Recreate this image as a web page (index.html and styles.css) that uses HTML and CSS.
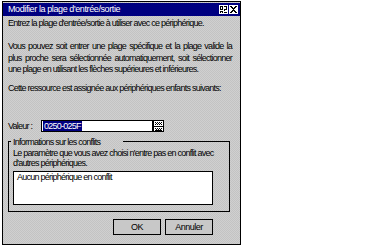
FILE: index.html
```html
<!DOCTYPE html>
<html lang="fr">
<head>
  <meta charset="UTF-8" />
  <title>Modifier la plage d'entrée/sortie</title>
  <link rel="stylesheet" href="styles.css">
</head>
<body>
  <div class="dialog">
    <div class="titlebar">
      <span class="title">Modifier la plage d'entrée/sortie</span>
      <span class="title-icons">
        <svg width="9" height="9" viewBox="0 0 9 9" shape-rendering="crispEdges">
          <rect x="0" y="0" width="9" height="9" fill="#fff"/>
          <path d="M1 1h3v1H1zM1 2h1v3H1zM3 2h1v2H3zM2 4h2v1H2zM5 1h3v1H5zM7 2h1v2H7zM5 4h3v1H5zM5 5h1v1H5zM1 6h3v1H1zM1 7h1v1H1zM5 7h3v1H5zM3 7h1v1H3z" fill="#000"/>
        </svg>
        <svg width="9" height="9" viewBox="0 0 9 9" shape-rendering="crispEdges">
          <rect x="0" y="0" width="9" height="9" fill="#fff"/>
          <path d="M1 1h2v1H1zM6 1h2v1H6zM2 2h2v1H2zM5 2h2v1H5zM3 3h3v1H3zM4 4h1v1H4zM3 5h3v1H3zM2 6h2v1H2zM5 6h2v1H5zM1 7h2v1H1zM6 7h2v1H6z" fill="#000"/>
        </svg>
      </span>
    </div>

    <div class="content">
      <p class="intro">Entrez la plage d'entrée/sortie à utiliser avec ce périphérique.</p>
      <p class="explain">
        <span class="jline">Vous pouvez soit entrer une plage spécifique et la plage valide la</span>
        <span class="jline">plus proche sera sélectionnée automatiquement, soit sélectionner</span>
        <span class="lastline">une plage en utilisant les flèches supérieures et inférieures.</span>
      </p>
      <p class="assigned">Cette ressource est assignée aux périphériques enfants suivants:</p>

      <div class="value-row">
        <label class="value-label">Valeur :</label>
        <div class="value-input"><span class="selected">0250-025F</span></div>
        <svg class="spinner" width="11" height="12" viewBox="0 0 11 12" shape-rendering="crispEdges">
          <rect x="0.5" y="0.5" width="10" height="11" fill="#fff" stroke="#000"/>
          <path d="M1 6h9v1H1z" fill="#000"/>
          <path d="M2 2h1v1H2zM4 2h1v1H4zM6 2h1v1H6zM8 2h1v1H8zM3 3h1v1H3zM5 3h1v1H5zM7 3h1v1H7zM2 4h1v1H2zM4 4h1v1H4zM6 4h1v1H6zM8 4h1v1H8z" fill="#000"/>
          <path d="M2 8h1v1H2zM4 8h1v1H4zM6 8h1v1H6zM8 8h1v1H8zM3 9h1v1H3zM5 9h1v1H5zM7 9h1v1H7zM2 10h7v1H2z" fill="#000"/>
        </svg>
      </div>

      <fieldset class="conflicts">
        <legend>Informations sur les conflits</legend>
        <p class="conflict-text">Le paramètre que vous avez choisi n'entre pas en conflit avec d'autres périphériques.</p>
        <div class="conflict-list">Aucun périphérique en conflit</div>
      </fieldset>

      <div class="buttons">
        <button class="btn">OK</button>
        <button class="btn">Annuler</button>
      </div>
    </div>
  </div>
</body>
</html>
```

FILE: styles.css
```css
:root {
  --navy: #000080;
  --gray: #c8c8c8;
  --font: 'Liberation Sans', Arial, sans-serif;
}

body {
  margin: 0;
  background: #fff;
  font-family: var(--font);
  font-size: 9px;
  letter-spacing: -0.75px;
  color: #000;
}

.dialog {
  box-sizing: border-box;
  width: 239px;
  height: 244px;
  margin: 1px 0 0 2px;
  border: 1px solid #000;
  background: repeating-conic-gradient(#c3c3c3 0 25%, #d0d0d0 0 50%) 0 0 / 2px 2px;
  display: flex;
  flex-direction: column;
}

.titlebar {
  height: 13px;
  margin: 1px 0 0 0;
  padding: 0 2px 0 5px;
  background: var(--navy);
  color: #fff;
  display: flex;
  align-items: center;
  justify-content: space-between;
}

.title {
  line-height: 13px;
  letter-spacing: -0.4px;
}

.title-icons {
  display: flex;
  gap: 1px;
}

.title-icons svg {
  display: block;
}

.content {
  padding: 2px 4px 0 5px;
  display: flex;
  flex-direction: column;
}

p {
  margin: 0;
  line-height: 11.5px;
}

.intro {
  margin-bottom: 11.5px;
}

.explain {
  width: 224px;
  margin-bottom: 7.5px;
}

.jline {
  display: block;
  text-align: justify;
  text-align-last: justify;
}

.lastline {
  display: block;
}

.value-row {
  display: flex;
  align-items: center;
  margin-top: 25px;
  height: 12px;
}

.value-label {
  width: 33px;
}

.value-input {
  width: 109px;
  height: 10px;
  border: 1px solid #000;
  background: #fff;
  display: flex;
  align-items: center;
  padding-left: 1px;
}

.selected {
  background: var(--navy);
  color: #fff;
  line-height: 10px;
  padding: 0 1px;
}

.spinner {
  display: block;
}

.conflicts {
  width: 222px;
  box-sizing: border-box;
  margin: 5px 0 0 0;
  padding: 0 2px 6px 4px;
  border: 1px solid #000;
}

.conflicts legend {
  padding: 0 23px 0 2px;
  margin-left: -2px;
  line-height: 10px;
}

.conflict-text {
  line-height: 10px;
  margin-top: 1px;
}

.conflict-list {
  width: 192px;
  margin: 3px 0 0 0;
  height: 32px;
  border: 1px solid #000;
  background: #fff;
  padding: 0 3px;
  line-height: 10px;
}

.buttons {
  display: flex;
  justify-content: flex-end;
  gap: 4px;
  margin: 7px 23px 0 0;
}

.btn {
  width: 48px;
  height: 16px;
  padding: 0;
  border: 1px solid #000;
  background: var(--gray);
  font-family: var(--font);
  font-size: 9px;
  letter-spacing: -0.5px;
  color: #000;
}
```
